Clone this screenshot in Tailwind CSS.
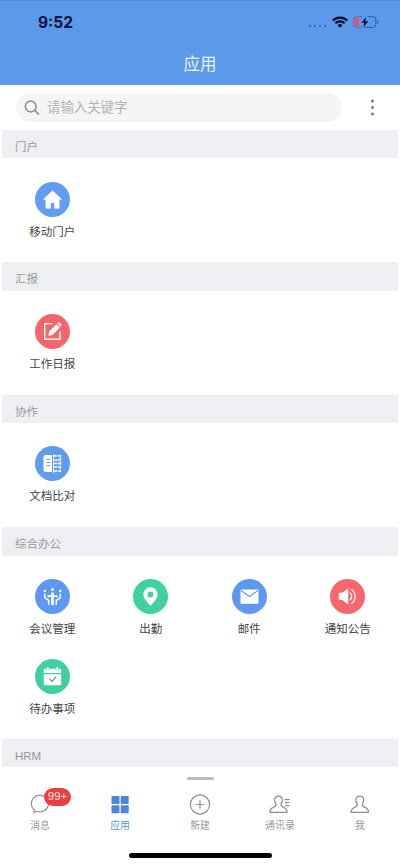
<!DOCTYPE html>
<html lang="zh-CN">
<head>
<meta charset="utf-8">
<title>应用</title>
<script src="https://cdn.jsdelivr.net/npm/@tailwindcss/browser@4"></script>
</head>
<body class="bg-white">
<div class="relative flex h-[866px] w-[400px] flex-col overflow-hidden bg-white font-['Liberation_Sans','Noto_Sans_CJK_SC',sans-serif] text-[#444]">
  <header class="flex h-[85px] shrink-0 flex-col border-t border-[#5489cf] bg-[#5c99ea]">
    <div class="flex h-[42px] items-center justify-between pr-[21px] pl-[38px]">
      <span class="pt-[2px] font-[Inter,sans-serif] text-[15.5px] leading-none font-bold text-[#07123f]">9:52</span>
      <div class="flex items-center">
        <svg class="mt-[7px] mr-[5px]" width="19" height="4" viewBox="0 0 19 4" fill="#426fab"><circle cx="2" cy="2" r="1.200"/><circle cx="7" cy="2" r="1.200"/><circle cx="12" cy="2" r="1.200"/><circle cx="17" cy="2" r="1.200"/></svg>
        <svg class="mr-[5px]" width="16" height="12" viewBox="0 0 16 12" fill="none" stroke="#07102f" stroke-width="2.1"><path d="M.8 4.6a10.2 10.2 0 0 1 14.4 0M3.3 7.3a6.6 6.6 0 0 1 9.4 0"/><path d="M8 11.8 5.4 9.3a3.7 3.7 0 0 1 5.2 0z" fill="#07102f" stroke="none"/></svg>
        <svg width="26" height="12" viewBox="0 0 26 12" fill="none"><path d="M9 .6H3.5A2.9 2.9 0 0 0 .6 3.5v5a2.9 2.9 0 0 0 2.9 2.9H9" stroke="#8a5d91"/><path d="M14.500.6h5.500a2.900 2.900 0 0 1 2.900 2.900v5a2.900 2.900 0 0 1-2.900 2.900H11" stroke="#365f9b"/><path d="M24.300 4v4c1.700-.7 1.700-3.300 0-4z" fill="#365f9b"/><rect x="2" y="2" width="4" height="8" rx="1.300" fill="#e6506d"/><path d="M13.200.9 8.500 6.700h2.800l-.8 4.500 4.700-6h-2.900z" fill="#07102f"/></svg>
      </div>
    </div>
    <h1 class="flex h-[42px] items-center justify-center text-[16.5px] leading-none text-[#e4f5ff]">应用</h1>
  </header>

  <div class="flex h-[45px] shrink-0 items-center pl-4">
    <div class="flex h-[29px] w-[326px] items-center rounded-full bg-[#f5f5f5] pl-[8px]">
      <svg width="16" height="16" viewBox="0 0 16 16" fill="none" stroke="#8c8c8c" stroke-width="1.500"><circle cx="6.700" cy="6.500" r="5.400"/><path d="m10.600 10.400 4.400 4.400"/></svg>
      <span class="ml-[7px] pt-px text-[13.4px] leading-none text-[#b4b4b4]">请输入关键字</span>
    </div>
    <svg class="ml-[28px]" width="5" height="17" viewBox="0 0 5 17" fill="#777"><circle cx="2.500" cy="2" r="1.500"/><circle cx="2.500" cy="8.500" r="1.500"/><circle cx="2.500" cy="15" r="1.500"/></svg>
  </div>

  <main class="flex flex-col text-[11.5px] leading-none">
    <section>
      <h2 class="mx-[2px] flex h-[28px] items-center bg-[#eeeff3] pt-[7px] pl-[13px] text-[#999]">门户</h2>
      <div class="grid h-[104px] grid-cols-4 px-[3px] pt-[24px]">
        <div class="flex flex-col items-center gap-[10px]">
          <svg width="35" height="35" viewBox="0 0 35 35"><circle cx="17.500" cy="17.500" r="17.500" fill="#629cf3"/><path d="M17.500 8.800 26.600 17.300h-2.500v9h-4.600v-5.600h-4v5.600h-4.600v-9H8.400z" fill="#fff" stroke="#fff" stroke-width=".6" stroke-linejoin="round"/></svg>
          <span>移动门户</span>
        </div>
      </div>
    </section>
    <section>
      <h2 class="mx-[2px] flex h-[29px] items-center bg-[#eeeff3] pt-[7px] pl-[13px] text-[#999]">汇报</h2>
      <div class="grid h-[104px] grid-cols-4 px-[3px] pt-[23px]">
        <div class="flex flex-col items-center gap-[10px]">
          <svg width="35" height="35" viewBox="0 0 35 35"><circle cx="17.500" cy="17.500" r="17.500" fill="#f8646b"/><path d="M17.500 9.800H9.700v15.400h15.400V17.500" fill="none" stroke="#fff" stroke-width="1.400"/><path d="m13.300 21.800.9-4.200 7.400-7.400 3.300 3.300-7.400 7.400zM22.400 9.400l1-.9q.7-.4 1.300.1l1.600 1.600q.6.700 0 1.300l-.8.900z" fill="#fff"/></svg>
          <span>工作日报</span>
        </div>
      </div>
    </section>
    <section>
      <h2 class="mx-[2px] flex h-[28px] items-center bg-[#eeeff3] pt-[7px] pl-[13px] text-[#999]">协作</h2>
      <div class="grid h-[104px] grid-cols-4 px-[3px] pt-[23px]">
        <div class="flex flex-col items-center gap-[10px]">
          <svg width="35" height="35" viewBox="0 0 35 35"><circle cx="17.500" cy="17.500" r="17.500" fill="#5f9bef"/><path d="M10.500 9H17v17h-6.500q-2 0-2-2V11q0-2 2-2z" fill="#fff"/><path d="M11.500 13.500h3.500M11.500 16.500h3.500M11.500 19.500h3.500" stroke="#5f9bef" stroke-width="1"/><path d="M18.500 9.800h6.800v15.400h-6.800" fill="none" stroke="#fff" stroke-width="1.700" stroke-dasharray="3.200 1"/><path d="M19.300 14h5M19.300 17.500h5M19.300 21h5" stroke="#fff" stroke-width="1.500" stroke-dasharray="2.800 .5"/><path d="M18.500 8v19" stroke="#fff" stroke-width=".9"/></svg>
          <span>文档比对</span>
        </div>
      </div>
    </section>
    <section>
      <h2 class="mx-[2px] flex h-[29px] items-center bg-[#eeeff3] pt-[7px] pl-[13px] text-[#999]">综合办公</h2>
      <div class="grid h-[183px] auto-rows-[80px] grid-cols-4 px-[3px] pt-[23px]">
        <div class="flex flex-col items-center gap-[10px]">
          <svg width="35" height="35" viewBox="0 0 35 35"><circle cx="17.500" cy="17.500" r="17.500" fill="#5f98f2"/><g fill="none" stroke="#fff" stroke-width="1.500"><path d="M9.800 14.500v4.300l3.900 2.700v4.300M25.200 14.500v4.300l-3.900 2.700v4.300"/><path d="M13.200 18.500v-1.600h8.600v1.600"/><path d="M17.500 13.500v12.500" stroke-width="2.600"/></g><g fill="#fff"><circle cx="9.800" cy="12" r="1.300"/><circle cx="17.500" cy="10.500" r="1.400"/><circle cx="25.200" cy="12" r="1.300"/></g></svg>
          <span>会议管理</span>
        </div>
        <div class="flex flex-col items-center gap-[10px]">
          <svg width="35" height="35" viewBox="0 0 35 35"><circle cx="17.500" cy="17.500" r="17.500" fill="#41d0a1"/><path fill-rule="evenodd" d="M17.500 8.300a7.100 7.100 0 0 1 7.100 7.100c0 4-4.300 8-7.100 11.300-2.800-3.300-7.100-7.300-7.100-11.300a7.100 7.100 0 0 1 7.100-7.100zm0 4.300a2.900 2.900 0 1 0 0 5.800 2.900 2.900 0 0 0 0-5.800z" fill="#fff"/></svg>
          <span>出勤</span>
        </div>
        <div class="flex flex-col items-center gap-[10px]">
          <svg width="35" height="35" viewBox="0 0 35 35"><circle cx="17.500" cy="17.500" r="17.500" fill="#5f99ef"/><rect x="8.500" y="10.400" width="18" height="14.300" rx="1" fill="#fff"/><path d="m9 11.500 8.500 6 8.500-6" fill="none" stroke="#6c96cd" stroke-width="1.100"/></svg>
          <span>邮件</span>
        </div>
        <div class="flex flex-col items-center gap-[10px]">
          <svg width="35" height="35" viewBox="0 0 35 35"><circle cx="17.500" cy="17.500" r="17.500" fill="#f9656c"/><path d="M9.800 13.800h2.400l6-4.600v16.400l-6-4.600H9.800q-1 0-1-1v-5.200q0-1 1-1z" fill="#fff"/><path d="M19.600 13.300c2.800 1.800 2.800 6.300 0 8.200M21.300 10.300c5 3.300 5 11 0 14.400" fill="none" stroke="#fff" stroke-width="1.300"/></svg>
          <span>通知公告</span>
        </div>
        <div class="flex flex-col items-center gap-[10px]">
          <svg width="35" height="35" viewBox="0 0 35 35"><circle cx="17.500" cy="17.500" r="17.500" fill="#42cea3"/><path d="M9.800 9.800h15.400q1 0 1 1V14H8.800v-3.200q0-1 1-1zM8.800 15.200h17.400v9.900q0 1.200-1.200 1.200H10q-1.200 0-1.200-1.200z" fill="#fff"/><path d="M12.700 8.600v2.600M22.300 8.600v2.600" stroke="#42cea3" stroke-width="3.200"/><path d="M12.700 8.300v3M22.300 8.300v3" stroke="#fff" stroke-width="1.900"/><path d="m14.200 19.700 2.600 2.600 4.300-4.300" fill="none" stroke="#4f9c84" stroke-width="1.200"/></svg>
          <span>待办事项</span>
        </div>
      </div>
    </section>
    <section>
      <h2 class="mx-[2px] flex h-[28px] items-center bg-[#eeeff3] pt-[8px] pl-[13px] text-[#999]">HRM</h2>
    </section>
  </main>

  <nav class="flex flex-1 flex-col items-center bg-white text-[9.8px] leading-none text-[#999]">
    <div class="mt-[10px] h-[3px] w-[27px] rounded-full bg-[#bbbbc0]"></div>
    <div class="mt-[14px] grid w-full grid-cols-5">
      <div class="relative flex flex-col items-center gap-[7px]">
        <svg width="20" height="20" viewBox="0 0 20 20" fill="none" stroke="#8f8f8f" stroke-width="1.200"><path d="M10 1.300a8.700 8.300 0 1 1-3.700 15.900Q5.500 18 3.700 18.800q.7-1.500.5-3A8.300 8.300 0 0 1 10 1.300z"/></svg>
        <span>消息</span>
        <span class="absolute top-[-6px] left-[44px] flex h-[18px] w-[27px] items-center justify-center rounded-full bg-[#ea3f42] text-[11.5px] text-[#ffe4e4]">99+</span>
      </div>
      <div class="flex flex-col items-center gap-[7px] text-[#5b93dd]">
        <svg width="20" height="20" viewBox="0 0 20 20" fill="#4c88da"><rect x="1.500" y="2" width="8" height="8" rx=".8"/><rect x="10.700" y="2" width="8" height="8" rx=".8"/><rect x="1.500" y="11.200" width="8" height="8" rx=".8"/><rect x="10.700" y="11.200" width="8" height="8" rx=".8"/></svg>
        <span>应用</span>
      </div>
      <div class="flex flex-col items-center gap-[7px]">
        <svg class="overflow-visible" width="20" height="20" viewBox="0 0 20 20" fill="none" stroke="#8f8f8f" stroke-width="1.200"><circle cx="10" cy="10.500" r="9.600"/><path d="M5.800 10.500h8.400M10 6.300v8.400"/></svg>
        <span>新建</span>
      </div>
      <div class="flex flex-col items-center gap-[7px]">
        <svg class="overflow-visible" width="20" height="20" viewBox="0 0 20 20" fill="none" stroke="#8c8c8c" stroke-width="1.300" stroke-linejoin="round"><path d="M8.500 2.200c2.700 0 4 1.800 3.800 4.300-.2 2-1.200 2.800-1.300 4.300 0 1.600 1.200 2 2.900 2.700 2.200.8 3.100 2 3.100 4.900H0c0-2.900.9-4.100 3.100-4.900 1.700-.7 2.900-1.100 2.900-2.700-.1-1.500-1.100-2.300-1.300-4.300-.2-2.500 1.100-4.300 3.800-4.300z"/><path d="M14.800 5.600h5M14.800 8.600h4.500M15.300 11.600h4.200" stroke-width="1.100"/></svg>
        <span>通讯录</span>
      </div>
      <div class="flex flex-col items-center gap-[7px]">
        <svg class="overflow-visible" width="20" height="20" viewBox="0 0 20 20" fill="none" stroke="#8c8c8c" stroke-width="1.300" stroke-linejoin="round"><path d="M9.800 2.200c2.700 0 4.100 1.800 3.900 4.300-.2 2-1.300 2.800-1.400 4.300 0 1.600 1.200 2 2.900 2.700 2.200.8 3.200 2 3.200 4.900H1.200c0-2.900 1-4.100 3.200-4.900 1.700-.7 2.900-1.100 2.900-2.700-.1-1.500-1.200-2.300-1.400-4.300-.2-2.500 1.200-4.300 3.900-4.300z"/></svg>
        <span>我</span>
      </div>
    </div>
    <div class="mt-[22px] h-[5px] w-[143px] rounded-full bg-black"></div>
  </nav>
</div>
</body>
</html>
